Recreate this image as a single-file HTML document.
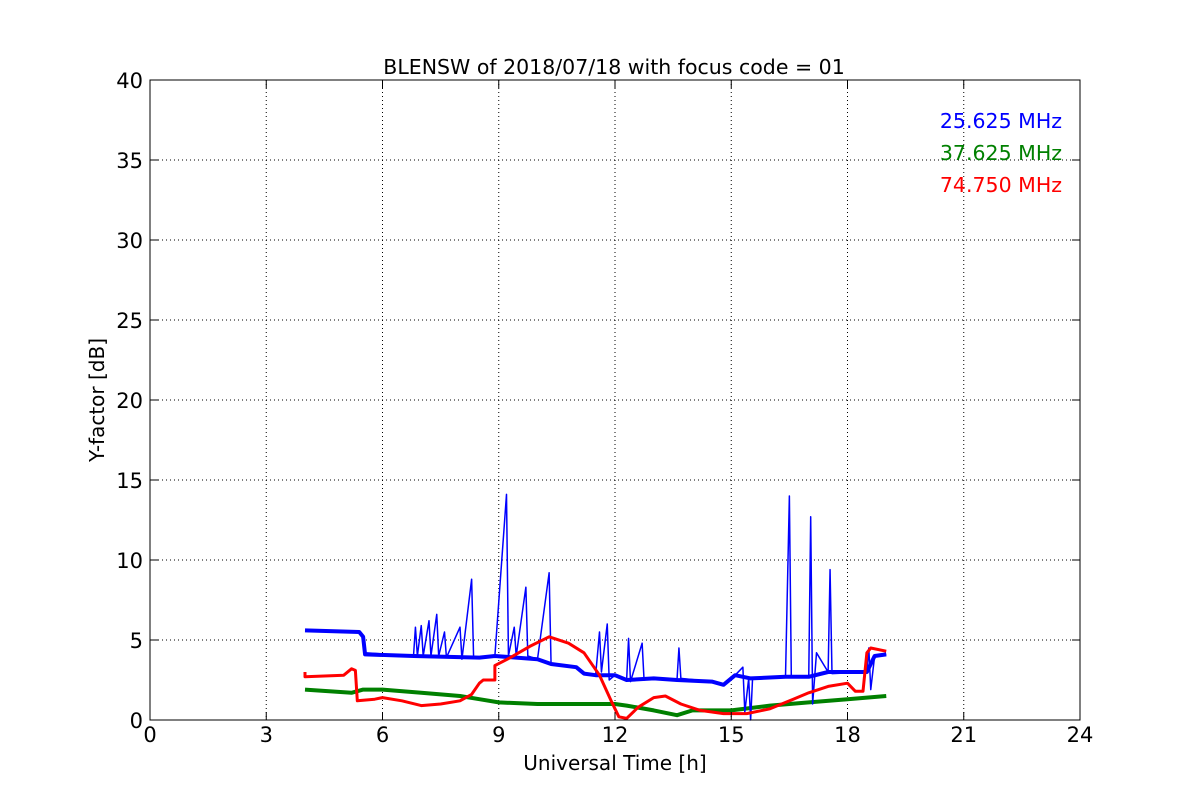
<!DOCTYPE html>
<html><head><meta charset="utf-8"><style>
html,body{margin:0;padding:0;background:#fff;}
svg{display:block;}
text{font-family:"DejaVu Sans","Liberation Sans",sans-serif;fill:#000;}
</style></head><body>
<svg width="1200" height="800" viewBox="0 0 1200 800" xmlns="http://www.w3.org/2000/svg">
<rect width="1200" height="800" fill="#fff"/>
<g stroke="#000" stroke-width="1" stroke-dasharray="1,3" fill="none">
<line x1="266.25" y1="80" x2="266.25" y2="720"/><line x1="382.5" y1="80" x2="382.5" y2="720"/>
<line x1="498.75" y1="80" x2="498.75" y2="720"/><line x1="615" y1="80" x2="615" y2="720"/>
<line x1="731.25" y1="80" x2="731.25" y2="720"/><line x1="847.5" y1="80" x2="847.5" y2="720"/>
<line x1="963.75" y1="80" x2="963.75" y2="720"/>
<line x1="150" y1="640" x2="1080" y2="640"/><line x1="150" y1="560" x2="1080" y2="560"/>
<line x1="150" y1="480" x2="1080" y2="480"/><line x1="150" y1="400" x2="1080" y2="400"/>
<line x1="150" y1="320" x2="1080" y2="320"/><line x1="150" y1="240" x2="1080" y2="240"/>
<line x1="150" y1="160" x2="1080" y2="160"/>
</g>
<g transform="translate(150,720) scale(38.75,-16)" fill="none" stroke-linejoin="round">
<polyline vector-effect="non-scaling-stroke" stroke="#008000" stroke-width="4" points="4,1.9 5.2,1.7 5.5,1.9 6,1.9 7,1.7 8,1.5 8.5,1.3 9,1.1 10,1.0 11,1.0 12,1.0 12.3,0.9 13,0.6 13.6,0.3 14,0.6 15,0.6 16,0.9 17,1.1 18,1.3 19,1.5"/>
<polyline vector-effect="non-scaling-stroke" stroke="#0000ff" stroke-width="4" points="4,5.6 5.4,5.5 5.5,5.2 5.55,4.1 6.8,4.0 8.5,3.9 8.9,4.0 10,3.8 10.35,3.5 11,3.3 11.2,2.9 11.5,2.8 12.0,2.8 12.3,2.5 13,2.6 13.6,2.5 14.5,2.4 14.8,2.2 15.1,2.8 15.5,2.6 16.4,2.7 17,2.7 17.5,3 18.5,3 18.7,4 19,4.1"/>
<polyline vector-effect="non-scaling-stroke" stroke="#0000ff" stroke-width="1.5" points="4,5.6 5.4,5.5 5.5,5.2 5.55,4.2 6.8,4.0 6.85,5.8 6.9,4 7.0,5.9 7.05,4 7.2,6.2 7.25,4 7.4,6.6 7.45,4 7.6,5.5 7.65,3.9 8.0,5.8 8.05,3.8 8.3,8.8 8.35,4.0 8.5,3.9 8.9,4.0 9.2,14.1 9.25,4.0 9.4,5.8 9.45,4 9.7,8.3 9.75,4.0 10,3.8 10.3,9.2 10.35,3.5 11,3.3 11.2,2.9 11.5,2.8 11.6,5.5 11.65,3 11.8,6 11.85,2.5 12.0,2.8 12.3,2.5 12.35,5.1 12.4,2.4 12.7,4.8 12.75,2.5 13,2.6 13.6,2.5 13.65,4.5 13.7,2.6 14.5,2.4 14.8,2.2 15.1,2.8 15.3,3.3 15.35,0.5 15.45,2.6 15.5,0 15.55,2.6 16.4,2.7 16.5,14.0 16.55,2.7 17,2.7 17.05,12.7 17.1,1 17.2,4.2 17.5,3 17.55,9.4 17.6,2.9 18.5,3 18.55,4.5 18.6,1.9 18.7,4 19,4.1"/>
<polyline vector-effect="non-scaling-stroke" stroke="#ff0000" stroke-width="3" points="4,3.0 4,2.7 5.0,2.8 5.2,3.2 5.3,3.1 5.35,1.2 5.8,1.3 6,1.4 6.5,1.2 7,0.9 7.5,1.0 8,1.2 8.3,1.6 8.5,2.3 8.6,2.5 8.9,2.5 8.9,3.4 9.3,3.9 9.8,4.6 10.3,5.2 10.8,4.8 11.2,4.2 11.6,2.8 11.9,1.2 12.1,0.2 12.3,0.1 12.6,0.8 13,1.4 13.3,1.5 13.7,1.0 14.2,0.6 14.8,0.4 15.4,0.4 16,0.7 16.6,1.3 17,1.7 17.5,2.1 18,2.3 18.2,1.8 18.4,1.8 18.5,4.2 18.6,4.5 19,4.3"/>
</g>
<rect x="150" y="80" width="930" height="640" fill="none" stroke="#000" stroke-width="1"/>
<g stroke="#000" stroke-width="1">
<path d="M266.25,720v-8M382.5,720v-8M498.75,720v-8M615,720v-8M731.25,720v-8M847.5,720v-8M963.75,720v-8M266.25,80v8M382.5,80v8M498.75,80v8M615,80v8M731.25,80v8M847.5,80v8M963.75,80v8"/>
<path d="M150,640h8M150,560h8M150,480h8M150,400h8M150,320h8M150,240h8M150,160h8M1080,640h-8M1080,560h-8M1080,480h-8M1080,400h-8M1080,320h-8M1080,240h-8M1080,160h-8"/>
</g>
<g font-size="21" text-anchor="middle">
<text x="150" y="742">0</text><text x="266.25" y="742">3</text><text x="382.5" y="742">6</text><text x="498.75" y="742">9</text><text x="615" y="742">12</text><text x="731.25" y="742">15</text><text x="847.5" y="742">18</text><text x="963.75" y="742">21</text><text x="1080" y="742">24</text>
</g>
<g font-size="21" text-anchor="end">
<text x="143" y="728">0</text><text x="143" y="648">5</text><text x="143" y="568">10</text><text x="143" y="488">15</text><text x="143" y="408">20</text><text x="143" y="328">25</text><text x="143" y="248">30</text><text x="143" y="168">35</text><text x="143" y="88">40</text>
</g>
<text x="615" y="770" font-size="20" text-anchor="middle">Universal Time [h]</text>
<text x="0" y="0" font-size="20" text-anchor="middle" transform="translate(104,400) rotate(-90)">Y-factor [dB]</text>
<text x="614" y="74" font-size="20.5" text-anchor="middle">BLENSW of 2018/07/18 with focus code = 01</text>
<g font-size="20.5" text-anchor="end">
<text x="1062" y="128" style="fill:#0000ff">25.625 MHz</text>
<text x="1062" y="160" style="fill:#008000">37.625 MHz</text>
<text x="1062" y="192" style="fill:#ff0000">74.750 MHz</text>
</g>
</svg>
</body></html>
